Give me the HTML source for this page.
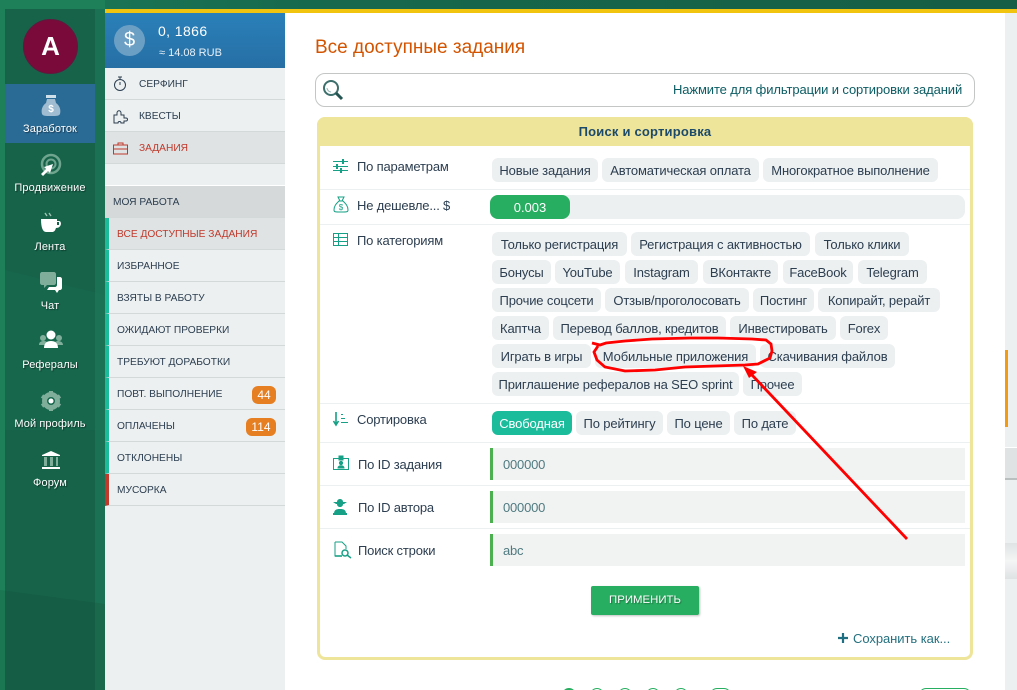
<!DOCTYPE html>
<html lang="ru"><head><meta charset="utf-8"><title>Все доступные задания</title>
<style>
*{box-sizing:border-box}
html,body{margin:0;padding:0;width:1017px;height:690px;overflow:hidden}
#r{position:relative;width:1017px;height:690px;overflow:hidden;background:#fff;font-family:"Liberation Sans","DejaVu Sans",sans-serif;color:#2c3e50}
.a{position:absolute}
.t{position:absolute;white-space:nowrap}
.nav{position:absolute;left:5px;width:90px;text-align:center;color:#fff;font-size:11px;text-shadow:1px 1px 1px rgba(0,0,0,.45);letter-spacing:.1px;margin-top:1px}
.m{position:absolute;left:105px;width:180px;height:32px;background:#ecf0f1;border-bottom:1px solid #d3d8d9;font-size:10.2px;line-height:33px;color:#2c3e50}
.m span{position:absolute;left:34px;white-space:nowrap}
.w{border-left:4px solid #1abc9c}
.w span{left:8px}
.b{position:absolute;height:18px;border-radius:6px;background:#e67e22;color:#fff;font-size:12px;line-height:18px;text-align:center}
.c{position:absolute;height:24px;border-radius:6px;background:#ecf0f1;font-size:13px;line-height:25px;text-align:center;color:#2c3e50;white-space:nowrap;letter-spacing:-.15px}
.l{position:absolute;white-space:nowrap;font-size:13px;color:#2c3e50;letter-spacing:-.18px}
.s{position:absolute;left:320px;width:650px;height:1px;background:#ecf0f1}
.i{position:absolute;left:490px;width:475px;height:32px;background:#f1f2f2;border-left:3px solid #4caf50;font-size:13px;line-height:33px;padding-left:10px;color:#4f7b80;letter-spacing:-.2px}
.p{position:absolute;top:688px;height:14px;border:1px solid #27ae60;border-radius:7px}
svg{position:absolute;overflow:visible}
</style></head><body><div id="r">

<!-- top and sidebar -->
<div class="a" style="left:0;top:0;width:1017px;height:9px;background:linear-gradient(90deg,#1b7a58 0,#17694d 30%,#165e45 100%)"></div>
<div class="a" style="left:0;top:0;width:105px;height:690px;background:#1d8059"></div>
<div class="a" style="left:5px;top:9px;width:90px;height:681px;background:#16634a"></div>
<div class="a" style="left:95px;top:9px;width:10px;height:681px;background:#1b7153"></div>
<svg style="left:0;top:0" width="105" height="690"><polygon points="0,590 105,604 105,690 0,690" fill="#153a2a" opacity=".14"/><polygon points="5,270 105,295 105,430 5,430" fill="#1c7a58" opacity=".2"/></svg>
<div class="a" style="left:5px;top:84px;width:90px;height:59px;background:#2a6b96"></div>
<div class="a" style="left:23px;top:19px;width:55px;height:55px;border-radius:50%;background:#7a0a3a;border:1px solid #5e1a3d;color:#fff;font-size:26px;font-weight:bold;line-height:53px;text-align:center">A</div>

<svg style="left:39px;top:94px" width="24" height="24"><rect x="7" y="1" width="10" height="3" fill="#cfe0ea"/><path d="M8 5h8l1 4c4 3 5 7 4 11-1 2-3 2-9 2s-8 0-9-2c-1-4 0-8 4-11z" fill="#9fbcd0"/><text x="12" y="18" font-size="10" font-weight="bold" text-anchor="middle" fill="#fff">$</text></svg>
<div class="nav" style="top:122px">Заработок</div>
<svg style="left:39px;top:153px" width="24" height="24"><circle cx="12" cy="11" r="9" fill="none" stroke="#6fa58f" stroke-width="2.5"/><circle cx="12" cy="11" r="4.5" fill="none" stroke="#6fa58f" stroke-width="2"/><path d="M2 21l5-5-2-2 9-3-3 9-2-2-5 5z" fill="#fff"/></svg>
<div class="nav" style="top:181px">Продвижение</div>
<svg style="left:39px;top:212px" width="24" height="24"><path d="M6 1l2 3M10 1l2 3" stroke="#9cc4b3" stroke-width="1.4"/><path d="M2 7h16v2h2c3 0 3 7-3 7-1 3-2 4-4 4H7c-3 0-5-4-5-13z" fill="#fff"/><rect x="18" y="10" width="2" height="3" fill="#16634a"/></svg>
<div class="nav" style="top:240px">Лента</div>
<svg style="left:39px;top:271px" width="24" height="24"><path d="M18 6h3c1 0 2 1 2 2v9c0 1-1 2-2 2h-1l-2 3-2-3H8l2-3h6c1 0 2-1 2-2z" fill="#fff"/><path d="M3 1h12c1 0 2 1 2 2v9c0 1-1 2-2 2H8l-3 3v-3H3c-1 0-2-1-2-2V3c0-1 1-2 2-2z" fill="#7fae9b"/></svg>
<div class="nav" style="top:299px">Чат</div>
<svg style="left:38px;top:330px" width="26" height="22"><circle cx="5" cy="8" r="3" fill="#7fae9b"/><circle cx="21" cy="8" r="3" fill="#7fae9b"/><path d="M1 15c0-3 2-4 5-4s4 2 4 4zM16 15c0-3 2-4 4-4s5 1 5 4z" fill="#7fae9b"/><circle cx="13" cy="5" r="4.5" fill="#fff"/><path d="M6 18c0-5 3-7 7-7s7 2 7 7z" fill="#fff"/></svg>
<div class="nav" style="top:358px">Рефералы</div>
<svg style="left:41px;top:391px" width="20" height="20"><circle cx="10" cy="10" r="6.500" fill="none" stroke="#7fae9b" stroke-width="5"/><path d="M10 0v3M10 17v3M1 5l3 2M16 13l3 2M19 5l-3 2M4 13l-3 2" stroke="#7fae9b" stroke-width="4"/><circle cx="10" cy="10" r="2.500" fill="#fff"/></svg>
<div class="nav" style="top:417px">Мой профиль</div>
<svg style="left:40px;top:450px" width="22" height="20"><path d="M2 5L11 1l9 4v1H2z" fill="#fff"/><path d="M4 7h3v9H4zM10 7h3v9h-3zM16 7h2v9h-2z" fill="#7fae9b"/><rect x="2" y="17" width="18" height="2" fill="#fff"/></svg>
<div class="nav" style="top:476px">Форум</div>

<!-- yellow strip -->
<div class="a" style="left:105px;top:9px;width:912px;height:4px;background:#f1c40f"></div>

<!-- left panel -->
<div class="a" style="left:105px;top:13px;width:180px;height:677px;background:#ecf0f1"></div>
<div class="a" style="left:105px;top:13px;width:180px;height:55px;background:linear-gradient(#2a80b9,#266fa5)"></div>
<div class="a" style="left:114px;top:25px;width:31px;height:31px;border-radius:50%;background:#6c9fc4;color:#fff;font-size:20px;line-height:31px;text-align:center">$</div>
<div class="t" style="left:158px;top:23px;color:#fff;font-size:14px;letter-spacing:.4px">0, 1866</div>
<div class="t" style="left:159px;top:47px;color:#e8f1f7;font-size:11px">≈ 14.08 RUB</div>

<div class="m" style="top:68px"><span>СЕРФИНГ</span></div>
<div class="m" style="top:100px"><span>КВЕСТЫ</span></div>
<div class="m" style="top:132px;background:#dfe3e4;color:#c0392b"><span>ЗАДАНИЯ</span></div>
<div class="a" style="left:105px;top:185px;width:180px;height:1px;background:#fff"></div>
<div class="m" style="top:186px;background:#d5d9da"><span style="left:8px">МОЯ РАБОТА</span></div>
<div class="m w" style="top:218px;background:#dfe3e4;color:#c0392b"><span>ВСЕ ДОСТУПНЫЕ ЗАДАНИЯ</span></div>
<div class="m w" style="top:250px"><span>ИЗБРАННОЕ</span></div>
<div class="m w" style="top:282px"><span>ВЗЯТЫ В РАБОТУ</span></div>
<div class="m w" style="top:314px"><span>ОЖИДАЮТ ПРОВЕРКИ</span></div>
<div class="m w" style="top:346px"><span>ТРЕБУЮТ ДОРАБОТКИ</span></div>
<div class="m w" style="top:378px"><span>ПОВТ. ВЫПОЛНЕНИЕ</span></div>
<div class="m w" style="top:410px"><span>ОПЛАЧЕНЫ</span></div>
<div class="m w" style="top:442px"><span>ОТКЛОНЕНЫ</span></div>
<div class="m w" style="top:474px;border-left-color:#c0392b"><span>МУСОРКА</span></div>
<div class="b" style="left:252px;top:386px;width:24px">44</div>
<div class="b" style="left:246px;top:418px;width:30px">114</div>

<svg style="left:113px;top:76px" width="14" height="16" fill="none" stroke="#2c3e50"><circle cx="7" cy="9" r="5.5"/><path d="M5 1h4M7 1v2M7 6v3"/></svg>
<svg style="left:113px;top:108px" width="17" height="16" fill="none" stroke="#2c3e50"><path d="M1 7h3V5c0-3 4-3 4 0v2h3v3h2c2 0 2 3 0 3h-2v2H8c0-2-3-2-3 0H1z"/></svg>
<svg style="left:113px;top:142px" width="16" height="13" fill="none" stroke="#c0392b"><rect x=".5" y="3" width="14" height="9"/><path d="M5 3V1h5v2M.5 7h14"/></svg>

<!-- right rail -->
<div class="a" style="left:1005px;top:13px;width:12px;height:677px;background:#ecf0f1"></div>
<div class="a" style="left:1005px;top:350px;width:3px;height:77px;background:#f39c12"></div>
<div class="a" style="left:1005px;top:447px;width:12px;height:33px;background:#dfe3e4;border-top:1px solid #fff;border-bottom:2px solid #b9bebf"></div>
<div class="a" style="left:1005px;top:543px;width:12px;height:36px;background:linear-gradient(#dfe3e4,#f4f5f5 50%,#dfe3e4)"></div>

<!-- main -->
<div class="t" style="left:315px;top:37px;font-size:19px;color:#d35400">Все доступные задания</div>
<div class="a" style="left:315px;top:73px;width:660px;height:34px;border:1px solid #c4c6c6;border-radius:10px;background:#fff"></div>
<svg style="left:322px;top:79px" width="22" height="22" fill="none"><circle cx="9" cy="9" r="7" stroke="#3d6f6c" stroke-width="2"/><path d="M14 14l6 6" stroke="#245452" stroke-width="3"/><path d="M5 9c0 2 2 4 4 4" stroke="#8fb3b0"/></svg>
<div class="t" style="left:673px;top:82px;font-size:13px;color:#0b5c63;letter-spacing:-.11px">Нажмите для фильтрации и сортировки заданий</div>

<!-- card -->
<div class="a" style="left:317px;top:117px;width:656px;height:543px;border:3px solid #efe59a;border-radius:8px;background:#fff"></div>
<div class="a" style="left:317px;top:117px;width:656px;height:29px;background:#efe59a;border-radius:8px 8px 0 0"></div>
<div class="t" style="left:317px;width:656px;top:124px;text-align:center;font-size:13px;font-weight:bold;color:#1c4a6b;letter-spacing:.2px">Поиск и сортировка</div>

<div class="s" style="top:189px"></div><div class="s" style="top:224px"></div><div class="s" style="top:403px"></div><div class="s" style="top:442px"></div><div class="s" style="top:485px"></div><div class="s" style="top:528px"></div>

<div class="l" style="left:357px;top:159px">По параметрам</div>
<div class="l" style="left:357px;top:198px">Не дешевле... $</div>
<div class="l" style="left:357px;top:233px">По категориям</div>
<div class="l" style="left:357px;top:412px">Сортировка</div>
<div class="l" style="left:358px;top:457px">По ID задания</div>
<div class="l" style="left:358px;top:500px">По ID автора</div>
<div class="l" style="left:358px;top:543px">Поиск строки</div>

<svg style="left:333px;top:159px" width="16" height="14" stroke="#16a085" fill="none"><path d="M0 2.500h15M0 7.500h15M0 11.500h15"/><path d="M10 0v5M4 5v5M8 9v5" stroke-width="2"/></svg>
<svg style="left:333px;top:196px" width="16" height="17" stroke="#16a085" fill="none"><path d="M5 1h6L9 5h-2zM6 5C3 8 1 10 1 14c0 2 1 2 7 2s7 0 7-2c0-4-2-6-5-9z"/><text x="8" y="14" font-size="8" text-anchor="middle" fill="#16a085" stroke="none">$</text></svg>
<svg style="left:333px;top:233px" width="16" height="14" stroke="#16a085" fill="none"><rect x=".5" y=".5" width="14" height="12"/><path d="M.5 4.500h14M.5 8.500h14M5.500 .5v12"/></svg>
<svg style="left:333px;top:411px" width="16" height="16" fill="none" stroke="#16a085"><path d="M3 1v12M.5 10L3 14l2.500-4" stroke-width="1.600"/><path d="M8 3.500h2M8 7.500h4M8 11.500h7"/></svg>
<svg style="left:333px;top:456px" width="17" height="15" fill="none" stroke="#16a085"><rect x=".5" y="2.500" width="15" height="11"/><rect x="6" y="0" width="4" height="4" fill="#16a085"/><circle cx="8" cy="7" r="1.600" fill="#16a085"/><path d="M5 12c0-3 6-3 6 0z" fill="#16a085"/></svg>
<svg style="left:333px;top:499px" width="14" height="16" fill="#16a085"><path d="M0 3h14l-3 2H3z"/><path d="M4 3c0-4 6-4 6 0v2c0 4-6 4-6 0z"/><path d="M1 15c0-4 2-5 6-5s6 1 6 5z"/><rect x="0" y="14" width="14" height="2"/></svg>
<svg style="left:334px;top:541px" width="18" height="18" fill="none" stroke="#16a085"><path d="M1 1h7l4 4v3M1 1v14h7"/><path d="M1 15h7" stroke-width="1.600"/><circle cx="11" cy="12" r="3" stroke-width="1.500"/><path d="M13 14l4 3" stroke-width="1.500"/></svg>

<!-- chips -->
<div class="c" style="left:492px;top:158px;width:106px">Новые задания</div>
<div class="c" style="left:602px;top:158px;width:157px">Автоматическая оплата</div>
<div class="c" style="left:763px;top:158px;width:175px">Многократное выполнение</div>

<div class="a" style="left:490px;top:195px;width:475px;height:24px;border-radius:8px;background:#ecf0f1"></div>
<div class="a" style="left:490px;top:195px;width:80px;height:24px;border-radius:8px;background:#27ae60;color:#fff;font-size:13px;line-height:25px;text-align:center">0.003</div>

<div class="c" style="left:492px;top:232px;width:135px">Только регистрация</div>
<div class="c" style="left:631px;top:232px;width:179px">Регистрация с активностью</div>
<div class="c" style="left:815px;top:232px;width:94px">Только клики</div>

<div class="c" style="left:492px;top:260px;width:59px">Бонусы</div>
<div class="c" style="left:555px;top:260px;width:65px">YouTube</div>
<div class="c" style="left:625px;top:260px;width:73px">Instagram</div>
<div class="c" style="left:703px;top:260px;width:75px">ВКонтакте</div>
<div class="c" style="left:783px;top:260px;width:70px">FaceBook</div>
<div class="c" style="left:858px;top:260px;width:69px">Telegram</div>

<div class="c" style="left:492px;top:288px;width:109px">Прочие соцсети</div>
<div class="c" style="left:605px;top:288px;width:144px">Отзыв/проголосовать</div>
<div class="c" style="left:753px;top:288px;width:61px">Постинг</div>
<div class="c" style="left:818px;top:288px;width:122px">Копирайт, рерайт</div>

<div class="c" style="left:492px;top:316px;width:57px">Каптча</div>
<div class="c" style="left:553px;top:316px;width:173px">Перевод баллов, кредитов</div>
<div class="c" style="left:730px;top:316px;width:106px">Инвестировать</div>
<div class="c" style="left:840px;top:316px;width:48px">Forex</div>

<div class="c" style="left:492px;top:344px;width:99px">Играть в игры</div>
<div class="c" style="left:595px;top:344px;width:161px">Мобильные приложения</div>
<div class="c" style="left:760px;top:344px;width:135px">Скачивания файлов</div>

<div class="c" style="left:492px;top:372px;width:247px">Приглашение рефералов на SEO sprint</div>
<div class="c" style="left:743px;top:372px;width:59px">Прочее</div>

<div class="c" style="left:492px;top:411px;width:80px;background:#1abc9c;color:#fff">Свободная</div>
<div class="c" style="left:576px;top:411px;width:87px">По рейтингу</div>
<div class="c" style="left:667px;top:411px;width:63px">По цене</div>
<div class="c" style="left:734px;top:411px;width:62px">По дате</div>

<div class="i" style="top:448px">000000</div>
<div class="i" style="top:491px">000000</div>
<div class="i" style="top:534px">abc</div>

<div class="a" style="left:591px;top:586px;width:108px;height:29px;background:#27ae60;border-radius:2px;color:#fff;font-size:11.4px;line-height:29px;text-align:center;box-shadow:1px 1px 2px rgba(0,0,0,.25);text-shadow:1px 1px 1px rgba(0,0,0,.3)">ПРИМЕНИТЬ</div>
<svg style="left:838px;top:633px" width="11" height="11"><path d="M5 0v10M0 5h10" stroke="#1f6f82" stroke-width="2.200"/></svg>
<div class="t" style="left:853px;top:631px;font-size:13px;color:#23707f;letter-spacing:-.05px">Сохранить как...</div>

<!-- pagination -->
<div class="p" style="left:562px;width:14px;background:#27ae60"></div>
<div class="p" style="left:590px;width:14px"></div>
<div class="p" style="left:618px;width:14px"></div>
<div class="p" style="left:646px;width:14px"></div>
<div class="p" style="left:674px;width:14px"></div>
<div class="p" style="left:710px;width:21px"></div>
<div class="p" style="left:919px;width:52px"></div>

<!-- annotation -->
<svg style="left:0;top:0" width="1017" height="690" fill="none" stroke="#f00">
<path d="M592 343L600 345 606 343 625 341 652 339 690 338 718 338 752 339 766 340 771 344 772 351 770 358 758 364 745 365 715 366 685 367 655 370 625 371 605 367 597 360 594 352 598 346" stroke-width="2.800"/>
<path d="M907 539L752 375" stroke-width="2.800"/>
<polygon points="743,366 757,372 749,378" fill="#f00" stroke="none"/>
</svg>

</div></body></html>
